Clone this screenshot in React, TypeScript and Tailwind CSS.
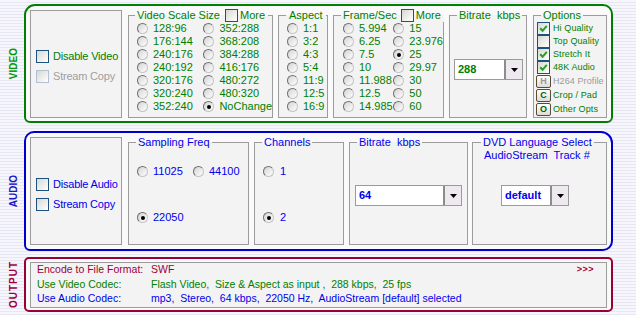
import React from "react";

function Radio({ on }: { on?: boolean }) {
  return (
    <span className="flex h-[11px] w-[11px] shrink-0 items-center justify-center rounded-full border border-t-[#6e6e6e] border-l-[#6e6e6e] border-r-[#c4c4c4] border-b-[#c4c4c4] bg-linear-to-br from-[#d4d4d4] to-white">
      {on && <span className="h-[4px] w-[4px] rounded-full bg-black" />}
    </span>
  );
}

function Check({ on, disabled }: { on?: boolean; disabled?: boolean }) {
  return (
    <span
      className={`flex h-[13px] w-[13px] shrink-0 items-center justify-center border bg-linear-to-br from-[#d8d8d2] to-white ${
        disabled ? "border-[#b2c2d4]" : "border-[#1c5180]"
      }`}
    >
      {on && (
        <svg viewBox="0 0 9 9" className="h-[9px] w-[9px]">
          <path d="M1.2 4.2 L3.6 6.8 L7.8 1.8" stroke="#21a121" strokeWidth="2" fill="none" />
        </svg>
      )}
    </span>
  );
}

function Select({ value, className, color }: { value: string; className: string; color: string }) {
  return (
    <div className={`flex h-[21px] border border-[#9a9a9a] bg-white ${className}`}>
      <span className={`flex flex-1 items-center pl-[3px] text-[11px] font-bold ${color}`}>{value}</span>
      <span className="flex w-[18px] items-center justify-center border-l-2 border-[#8c8c8c] bg-[#eee9ee]">
        <svg viewBox="0 0 7 4" className="h-[4px] w-[7px]">
          <path d="M0 0 L7 0 L3.5 4 Z" fill="#000" />
        </svg>
      </span>
    </div>
  );
}

function Group({
  title,
  className,
  legendClass = "ml-[7px] px-[2px]",
  children,
}: {
  title: React.ReactNode;
  className: string;
  legendClass?: string;
  children?: React.ReactNode;
}) {
  return (
    <fieldset className={`min-w-0 shrink-0 border border-[#9c9c9c] bg-[#f3f3f3] ${className}`}>
      <legend className={`leading-[13px] ${legendClass}`}>{title}</legend>
      {children}
    </fieldset>
  );
}

function SideLabel({ text, className }: { text: string; className: string }) {
  return (
    <div className="flex w-[24px] shrink-0 items-center justify-center pl-[4px]">
      <span className={`rotate-180 text-[10px] font-bold leading-none [writing-mode:vertical-rl] ${className}`}>
        {text}
      </span>
    </div>
  );
}

function RadioCol({ items, sel, className = "" }: { items: string[]; sel?: string; className?: string }) {
  return (
    <div className={className}>
      {items.map((t) => (
        <div key={t} className="flex h-[13px] items-center">
          <Radio on={t === sel} />
          <span className="ml-[5px] whitespace-nowrap">{t}</span>
        </div>
      ))}
    </div>
  );
}

function OptBtn({ letter, muted }: { letter: string; muted?: boolean }) {
  return (
    <span
      className={`flex h-[13px] w-[15px] shrink-0 items-center justify-center rounded-[2px] border border-[#5c4a36] bg-linear-to-b from-white to-[#dedbd4] text-[9px] font-bold leading-none ${
        muted ? "text-[#9a9a9a]" : "text-[#006400]"
      }`}
    >
      {letter}
    </span>
  );
}

export default function App() {
  return (
    <div className="h-[315px] w-[636px] overflow-hidden bg-[repeating-linear-gradient(180deg,#f6f6fc_0px,#f6f6fc_2px,#e7e7f3_2px,#e7e7f3_3px)] font-['Liberation_Sans','Arial',sans-serif]">
      {/* VIDEO */}
      <div className="flex pt-[4px]">
        <SideLabel text="VIDEO" className="text-[#009a00]" />
        <div className="w-[589px] rounded-tl-[11px] rounded-tr-[10px] rounded-b-[6px] border-2 border-[#008000] bg-[#fafafa] px-[4px] py-[3px]">
          <div className="flex h-[109px] text-[11px] leading-[13px] text-[#008000]">
            <div className="mt-[1px] flex w-[92px] shrink-0 flex-col justify-center gap-[7px] border border-[#9c9c9c] bg-[#f3f3f3] pl-[5px] pt-[4px]">
              <div className="flex h-[13px] items-center">
                <Check />
                <span className="ml-[4px] whitespace-nowrap tracking-[-0.2px]">Disable Video</span>
              </div>
              <div className="flex h-[13px] items-center">
                <Check disabled />
                <span className="ml-[4px] whitespace-nowrap tracking-[-0.2px] text-[#a0a0a0]">Stream Copy</span>
              </div>
            </div>

            <Group
              className="ml-[6px] w-[145px]"
              legendClass="ml-[6px] pl-[2px] pr-[3px]"
              title={
                <span className="inline-flex items-center">
                  Video Scale Size
                  <span className="ml-[5px]">
                    <Check />
                  </span>
                  <span className="ml-[2px]">More</span>
                </span>
              }
            >
              <div className="flex pl-[8px]">
                <RadioCol className="w-[67px]" items={["128:96", "176:144", "240:176", "240:192", "320:176", "320:240", "352:240"]} />
                <RadioCol items={["352:288", "368:208", "384:288", "416:176", "480:272", "480:320", "NoChange"]} sel="NoChange" />
              </div>
            </Group>

            <Group className="ml-[5px] w-[50px]" legendClass="ml-[7px] px-[3px]" title="Aspect">
              <RadioCol className="pl-[8px]" items={["1:1", "3:2", "4:3", "5:4", "11:9", "12:5", "16:9"]} />
            </Group>

            <Group
              className="ml-[5px] w-[111px]"
              legendClass="ml-[7px] pl-[2px] pr-[3px]"
              title={
                <span className="inline-flex items-center">
                  Frame/Sec
                  <span className="ml-[4px]">
                    <Check />
                  </span>
                  <span className="ml-[2px]">More</span>
                </span>
              }
            >
              <div className="flex pl-[9px]">
                <RadioCol className="w-[52px]" items={["5.994", "6.25", "7.5", "10", "11.988", "12.5", "14.985"]} />
                <RadioCol items={["15", "23.976", "25", "29.97", "30", "50", "60"]} sel="25" />
              </div>
            </Group>

            <Group className="ml-[5px] w-[78px]" title={<span className="whitespace-pre">Bitrate  kbps</span>}>
              <div className="pl-[4px] pt-[37px]">
                <Select value="288" className="w-[69px]" color="text-[#008000]" />
              </div>
            </Group>

            <Group className="ml-[6px] w-[74px]" title="Options">
              <div className="pl-[2px] text-[9px] tracking-[0.1px]">
                {[
                  ["Hi Quality", true],
                  ["Top Quality", false],
                  ["Stretch It", true],
                  ["48K Audio", true],
                ].map(([t, on]) => (
                  <div key={t as string} className="flex h-[13px] items-center">
                    <span className="ml-[1px]">
                      <Check on={on as boolean} />
                    </span>
                    <span className="ml-[3px] whitespace-nowrap">{t}</span>
                  </div>
                ))}
                <div className="flex h-[14px] items-center">
                  <OptBtn letter="H" muted />
                  <span className="ml-[2px] whitespace-nowrap text-[#9a9a9a]">H264 Profile</span>
                </div>
                <div className="flex h-[14px] items-center">
                  <OptBtn letter="C" />
                  <span className="ml-[2px] whitespace-nowrap">Crop / Pad</span>
                </div>
                <div className="flex h-[14px] items-center">
                  <OptBtn letter="O" />
                  <span className="ml-[2px] whitespace-nowrap">Other Opts</span>
                </div>
              </div>
            </Group>
          </div>
        </div>
      </div>

      {/* AUDIO */}
      <div className="flex pt-[8px]">
        <SideLabel text="AUDIO" className="text-[#1a1ac4]" />
        <div className="w-[589px] rounded-tl-[10px] rounded-tr-[12px] rounded-bl-[6px] rounded-br-[10px] border-2 border-[#0000cc] bg-[#fafafa] px-[4px] pt-[3px] pb-[4px]">
          <div className="flex h-[109px] text-[11px] leading-[13px] text-[#0000ee]">
            <div className="mt-[1px] flex w-[92px] shrink-0 flex-col justify-center gap-[7px] border border-[#9c9c9c] bg-[#f3f3f3] pl-[5px] pt-[7px]">
              <div className="flex h-[13px] items-center">
                <Check />
                <span className="ml-[4px] whitespace-nowrap tracking-[-0.2px]">Disable Audio</span>
              </div>
              <div className="flex h-[13px] items-center">
                <Check />
                <span className="ml-[4px] whitespace-nowrap tracking-[-0.2px]">Stream Copy</span>
              </div>
            </div>

            <Group className="ml-[6px] w-[121px]" title="Sampling Freq">
              <div className="pl-[8px] pt-[16px]">
                <div className="flex h-[13px] items-center">
                  <div className="flex w-[56px] items-center">
                    <Radio />
                    <span className="ml-[5px]">11025</span>
                  </div>
                  <Radio />
                  <span className="ml-[5px]">44100</span>
                </div>
                <div className="mt-[33px] flex h-[13px] items-center">
                  <Radio on />
                  <span className="ml-[5px]">22050</span>
                </div>
              </div>
            </Group>

            <Group className="ml-[5px] w-[90px]" title="Channels">
              <div className="pl-[8px] pt-[16px]">
                <div className="flex h-[13px] items-center">
                  <Radio />
                  <span className="ml-[6px]">1</span>
                </div>
                <div className="mt-[33px] flex h-[13px] items-center">
                  <Radio on />
                  <span className="ml-[6px]">2</span>
                </div>
              </div>
            </Group>

            <Group className="ml-[5px] w-[119px]" title={<span className="whitespace-pre">Bitrate  kbps</span>}>
              <div className="pl-[5px] pt-[36px]">
                <Select value="64" className="w-[107px]" color="text-[#0000ee]" />
              </div>
            </Group>

            <Group className="ml-[4px] w-[135px]" legendClass="ml-[8px] px-[2px]" title="DVD Language Select">
              <div className="h-[13px] whitespace-pre pl-[11px]">AudioStream  Track #</div>
              <div className="pl-[28px] pt-[23px]">
                <Select value="default" className="w-[68px]" color="text-[#0000ee]" />
              </div>
            </Group>
          </div>
        </div>
      </div>

      {/* OUTPUT */}
      <div className="flex pt-[6px]">
        <SideLabel text="OUTPUT" className="tracking-[1px] text-[#a0003a]" />
        <div className="w-[589px] rounded-[5px] border-2 border-[#990033] bg-[#fafafa] px-[4px] pt-[3px] pb-[2px]">
          <div className="h-[46px] border border-[#9c9c9c] bg-[#f3f3f3] pl-[6px] pr-[12px] text-[10.5px]">
            <div className="flex h-[14px] items-center text-[#a0003a]">
              <span className="w-[114px] shrink-0">Encode to File Format:</span>
              <span className="flex-1">SWF</span>
              <span className="text-[9px] font-bold tracking-[0.5px]">&gt;&gt;&gt;</span>
            </div>
            <div className="flex h-[15px] items-center whitespace-pre text-[#008000]">
              <span className="w-[114px] shrink-0">Use Video Codec:</span>
              <span>Flash Video,  Size &amp; Aspect as input ,  288 kbps,  25 fps</span>
            </div>
            <div className="flex h-[14px] items-center whitespace-pre text-[#0000ee]">
              <span className="w-[114px] shrink-0">Use Audio Codec:</span>
              <span>mp3,  Stereo,  64 kbps,  22050 Hz,  AudioStream [default] selected</span>
            </div>
          </div>
        </div>
      </div>
    </div>
  );
}
